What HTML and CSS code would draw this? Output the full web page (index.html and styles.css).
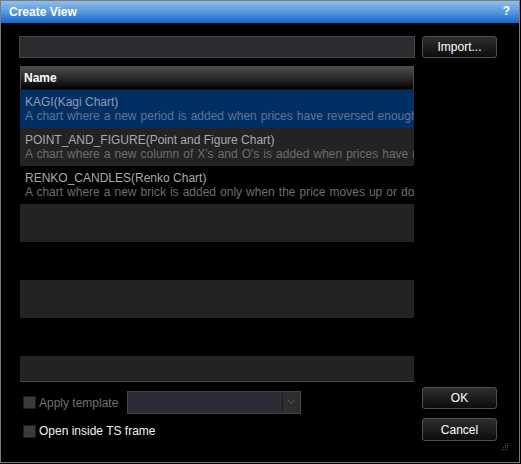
FILE: index.html
```html
<!DOCTYPE html>
<html>
<head>
<meta charset="utf-8">
<link rel="stylesheet" href="styles.css">
</head>
<body>
<div class="window">
  <div class="titlebar">
    <span class="title">Create View</span>
    <span class="help">?</span>
  </div>
  <div class="content">
    <div class="left">
      <div class="search"></div>
      <div class="table">
        <div class="thead">Name</div>
        <div class="tbody">
          <div class="row selected">
            <div class="rtitle">KAGI(Kagi Chart)</div>
            <div class="rdesc">A chart where a new period is added when prices have reversed enough</div>
          </div>
          <div class="row odd">
            <div class="rtitle">POINT_AND_FIGURE(Point and Figure Chart)</div>
            <div class="rdesc">A chart where a new column of X's and O's is added when prices have reversed</div>
          </div>
          <div class="row">
            <div class="rtitle">RENKO_CANDLES(Renko Chart)</div>
            <div class="rdesc">A chart where a new brick is added only when the price moves up or down</div>
          </div>
          <div class="row odd"></div>
          <div class="row"></div>
          <div class="row odd"></div>
          <div class="row"></div>
          <div class="row odd"></div>
        </div>
      </div>
      <div class="options">
        <div class="opt opt-template">
          <span class="check"></span>
          <span class="label disabled">Apply template</span>
          <div class="combo"><span class="combo-btn"><svg width="7" height="5" viewBox="0 0 7 5"><path d="M0 0h1v1h1v1h1v1h1V2h1V1h1V0h1v1H6v1H5v1H4v1H3V3H2V2H1V1H0z" fill="#5a5a5a"/></svg></span></div>
        </div>
        <div class="opt opt-frame">
          <span class="check"></span>
          <span class="label">Open inside TS frame</span>
        </div>
      </div>
    </div>
    <div class="right">
      <button class="btn">Import...</button>
      <div class="spacer"></div>
      <button class="btn">OK</button>
      <button class="btn btn-cancel">Cancel</button>
    </div>
  </div>
  <svg class="grip" width="8" height="8" viewBox="0 0 8 8">
    <g fill="#4a4a4a">
      <rect x="6" y="0" width="1" height="1"/>
      <rect x="4" y="2" width="1" height="1"/><rect x="6" y="2" width="1" height="1"/>
      <rect x="2" y="4" width="1" height="1"/><rect x="4" y="4" width="1" height="1"/><rect x="6" y="4" width="1" height="1"/>
      <rect x="0" y="6" width="1" height="1"/><rect x="2" y="6" width="1" height="1"/><rect x="4" y="6" width="1" height="1"/><rect x="6" y="6" width="1" height="1"/>
    </g>
  </svg>
</div>
</body>
</html>
```
FILE: styles.css
```css
html, body {
  margin: 0;
  padding: 0;
  background: #000;
}
body {
  width: 521px;
  height: 464px;
  font-family: "Liberation Sans", Arial, sans-serif;
  font-size: 12px;
}
.window {
  position: relative;
  width: 518px;
  height: 461px;
  border: 1px solid #7a7a7a;
  background: #000;
  display: flex;
  flex-direction: column;
}
.titlebar {
  height: 22px;
  flex: none;
  background: linear-gradient(#92bfea, #4f94de 55%, #1266cf);
  display: flex;
  align-items: center;
  justify-content: space-between;
  padding: 0 9px 0 8px;
  color: #fff;
  font-weight: bold;
}
.title { font-size: 12px; }
.help { font-size: 12px; margin-top: -2px; }
.content {
  display: flex;
  padding: 13px 0 0 18px;
  gap: 7px;
  flex: 1;
}
.left {
  width: 396px;
  display: flex;
  flex-direction: column;
}
.search {
  height: 20px;
  border: 1px solid #454545;
  background: #2b2c30;
}
.table {
  margin: 8px 1px 0 1px;
  border-bottom: 1px solid #474747;
  background: #000;
}
.thead {
  height: 22px;
  line-height: 22px;
  padding-left: 3px;
  background: linear-gradient(#4b4b4b, #2a2a2a 50%, #000);
  color: #fff;
  font-weight: bold;
  border: 1px solid #4a4a4a;
  border-bottom-color: #1a1a1a;
}
.tbody {
  height: 291px;
  overflow: hidden;
}
.row {
  height: 38px;
  box-sizing: border-box;
  padding: 5px 0 0 5px;
  background: #000;
  white-space: nowrap;
  overflow: hidden;
}
.row.odd { background: #232323; }
.row.selected { background: #003063; }
.rtitle {
  line-height: 14px;
  color: #a9a9a9;
}
.rdesc {
  line-height: 14px;
  color: #6d6d6d;
  word-spacing: 0.7px;
}
.selected .rtitle { color: #8d9cb2; }
.selected .rdesc { color: #5e7595; }
.options {
  padding: 9px 0 0 4px;
}
.opt {
  display: flex;
  align-items: center;
}
.opt-template { height: 23px; }
.opt-frame { height: 14px; margin-top: 10px; }
.check {
  width: 11px;
  height: 11px;
  background: #3b3b3b;
  border: 1px solid #1e1e1e;
  margin-right: 3px;
}
.label { color: #f0f0f0; }
.label.disabled { color: #6f6f6f; }
.combo {
  margin-left: 9px;
  width: 172px;
  height: 21px;
  border: 1px solid #444;
  background: #2b2c35;
  display: flex;
  justify-content: flex-end;
}
.combo-btn {
  width: 16px;
  height: 19px;
  margin: 1px;
  border-left: 1px solid #1c1c1c;
  background: #2e2e2e;
  display: flex;
  align-items: center;
  justify-content: center;
}
.right {
  width: 75px;
  display: flex;
  flex-direction: column;
}
.spacer { height: 329px; }
.btn {
  width: 75px;
  height: 22px;
  padding: 0;
  border: 1px solid #505050;
  border-radius: 3px;
  background: linear-gradient(#2e2e2e, #0c0c0c);
  color: #fff;
  font-family: "Liberation Sans", Arial, sans-serif;
  font-size: 12px;
}
.btn-cancel { margin-top: 9px; height: 23px; }
.grip {
  position: absolute;
  right: 10px;
  bottom: 11px;
}
```
